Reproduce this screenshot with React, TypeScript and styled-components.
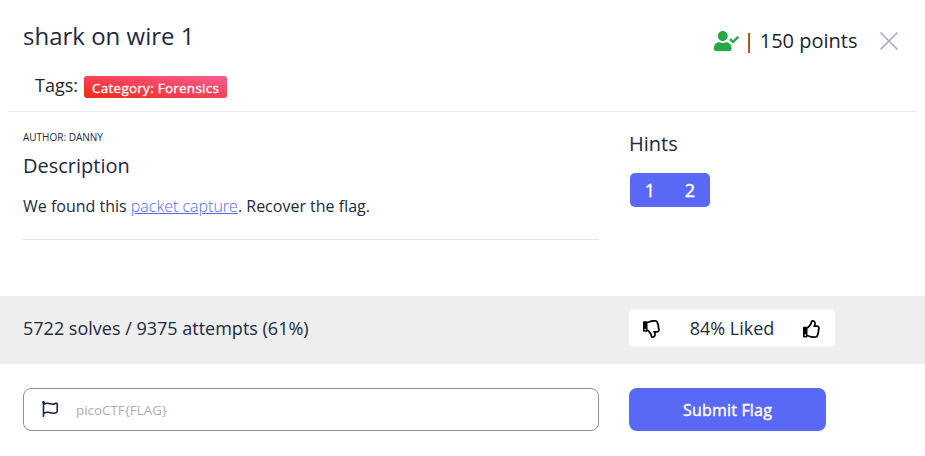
import React from 'react';
import styled, { createGlobalStyle } from 'styled-components';
import { FaUserCheck, FaRegThumbsDown, FaRegThumbsUp, FaRegFlag } from 'react-icons/fa';

const GlobalStyle = createGlobalStyle`
  *, *::before, *::after { box-sizing: border-box; }
  body {
    margin: 0;
    background: #fff;
    color: #1f2940;
    font-family: "Open Sans", sans-serif;
    font-size: 16px;
    line-height: 1.5;
  }
  h1, h2, p { margin: 0; font-weight: 400; }
  button, input { font-family: inherit; }
`;

const Modal = styled.div`
  height: 456px;
  display: flex;
  flex-direction: column;
  overflow: hidden;
`;

const Header = styled.header`
  display: flex;
  justify-content: space-between;
  height: 112px;
  margin: 0 8px;
  padding: 0 18.5px 0 15px;
  border-bottom: 1px solid #e9e9ec;
`;

const Title = styled.h1`
  padding-top: 18px;
  font-size: 24px;
  line-height: 36px;
`;

const Tags = styled.div`
  display: flex;
  align-items: center;
  gap: 6px;
  margin: 18px 0 0 12px;
  font-size: 18px;
  line-height: 27px;
  color: #212529;
`;

const Tag = styled.span`
  height: 22px;
  width: 143px;
  margin-top: 3px;
  padding: 1px 0 0 8px;
  border-radius: 3px;
  background: linear-gradient(to top right, #ee2a14 0%, #fc5c96 100%);
  color: #fff;
  font-size: 13.5px;
  letter-spacing: 0.25px;
  -webkit-text-stroke: 0.3px currentColor;
  line-height: 22px;
`;

const Status = styled.div`
  display: flex;
  align-items: center;
  height: 30px;
  margin-top: 26px;
  font-size: 20px;
  line-height: 30px;
  color: #212529;
`;

const SolvedIcon = styled(FaUserCheck)`
  width: 25px;
  height: 20px;
  margin-right: 5px;
  color: #28a745;
`;

const Points = styled.span`
  white-space: nowrap;
`;

const CloseButton = styled.button`
  display: flex;
  margin-left: 21px;
  padding: 0;
  border: 0;
  background: none;
  color: #a0a8c4;
`;

const Columns = styled.div`
  display: grid;
  grid-template-columns: 576px 206px;
  column-gap: 30px;
  padding: 0 23px;
`;

const Body = styled(Columns)`
  height: 184px;
`;

const Details = styled.section`
  height: 128px;
  border-bottom: 1px solid #e5e5e5;
`;

const Author = styled.p`
  padding-top: 17px;
  font-size: 10px;
  line-height: 17px;
`;

const Heading = styled.h2`
  font-size: 20px;
  line-height: 30px;
`;

const DescriptionHeading = styled(Heading)`
  margin-top: 5px;
`;

const Description = styled.p`
  margin-top: 13px;
  line-height: 24px;
`;

const Link = styled.a`
  color: #5969f6;
  font-weight: 300;
  text-decoration: underline;
`;

const HintsHeading = styled(Heading)`
  margin-top: 17px;
`;

const HintGroup = styled.div`
  display: inline-flex;
  margin: 14px 0 0 1px;
  border-radius: 5px;
  overflow: hidden;
`;

const HintButton = styled.button`
  width: 40px;
  height: 34px;
  padding: 0;
  border: 0;
  background: #5969f6;
  color: #fff;
  font-size: 18px;
  -webkit-text-stroke: 0.4px currentColor;
`;

const StatsBar = styled(Columns)`
  height: 68px;
  padding-top: 13px;
  background: #eee;
`;

const Stats = styled.p`
  font-size: 18px;
  line-height: 38px;
`;

const Rating = styled.div`
  display: flex;
  align-items: center;
  justify-content: space-between;
  height: 38px;
  padding: 0 14px;
  border-radius: 5px;
  background: #fff;
  color: #1f2940;
  font-size: 18px;
`;

const VoteButton = styled.button`
  display: flex;
  padding: 1px 0 0;
  border: 0;
  background: none;
  color: #000;
`;

const SubmitRow = styled(Columns)`
  padding-top: 24px;
`;

const FlagField = styled.label`
  display: flex;
  align-items: center;
  height: 43px;
  padding-left: 18px;
  border: 1px solid #8f8f9f;
  border-radius: 8px;
`;

const FlagIcon = styled(FaRegFlag)`
  width: 16px;
  height: 16px;
  margin-bottom: 2px;
  stroke: currentColor;
  stroke-width: 4px;
`;

const FlagInput = styled.input`
  flex: 1;
  height: 100%;
  margin-left: 18px;
  padding: 0;
  border: 0;
  outline: 0;
  background: none;
  color: #1f2940;
  font-size: 13.4px;
  &::placeholder { color: #adadb8; opacity: 1; }
`;

const SubmitButton = styled.button`
  width: 197px;
  height: 43px;
  padding: 1px 0 0;
  border: 0;
  border-radius: 8px;
  background: #5969f6;
  color: #fff;
  font-size: 16px;
  letter-spacing: 0.2px;
  -webkit-text-stroke: 0.4px currentColor;
`;

export default function App() {
  return (
    <>
      <GlobalStyle />
      <Modal>
        <Header>
          <div>
            <Title>shark on wire 1</Title>
            <Tags>
              Tags:
              <Tag>Category: Forensics</Tag>
            </Tags>
          </div>
          <Status>
            <SolvedIcon />
            <Points>| 150 points</Points>
            <CloseButton aria-label="Close">
              <svg width="20" height="20" viewBox="0 0 20 20" fill="none" stroke="currentColor" strokeWidth="1.5">
                <path d="M1.5 1.5 18.5 18.5M18.5 1.5 1.5 18.5" />
              </svg>
            </CloseButton>
          </Status>
        </Header>
        <Body>
          <Details>
            <Author>AUTHOR: DANNY</Author>
            <DescriptionHeading>Description</DescriptionHeading>
            <Description>
              We found this <Link href="#">packet capture</Link>. Recover the flag.
            </Description>
          </Details>
          <section>
            <HintsHeading>Hints</HintsHeading>
            <HintGroup>
              <HintButton>1</HintButton>
              <HintButton>2</HintButton>
            </HintGroup>
          </section>
        </Body>
        <StatsBar>
          <Stats>5722 solves / 9375 attempts (61%)</Stats>
          <Rating>
            <VoteButton aria-label="Dislike"><FaRegThumbsDown size={18} /></VoteButton>
            <span>84% Liked</span>
            <VoteButton aria-label="Like"><FaRegThumbsUp size={18} /></VoteButton>
          </Rating>
        </StatsBar>
        <SubmitRow>
          <FlagField>
            <FlagIcon />
            <FlagInput placeholder="picoCTF{FLAG}" />
          </FlagField>
          <SubmitButton>Submit Flag</SubmitButton>
        </SubmitRow>
      </Modal>
    </>
  );
}
